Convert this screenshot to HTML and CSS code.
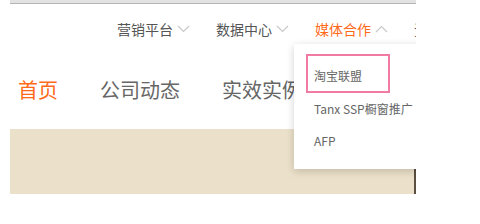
FILE: index.html
```html
<!DOCTYPE html>
<html lang="zh">
<head>
<meta charset="utf-8">
<link rel="stylesheet" href="styles.css">
</head>
<body>
<div class="frame">
  <div class="topbar"></div>
  <nav class="subnav">
    <span class="sub-item">营销平台<svg class="chev" viewBox="0 0 13 8"><path d="M1 1 L6.5 6.5 L12 1" /></svg></span>
    <span class="sub-item">数据中心<svg class="chev" viewBox="0 0 13 8"><path d="M1 1 L6.5 6.5 L12 1" /></svg></span>
    <span class="sub-item active">媒体合作<svg class="chev" viewBox="0 0 13 8"><path d="M1 7 L6.5 1.5 L12 7" /></svg></span>
    <span class="sub-item">资讯中心</span>
  </nav>
  <nav class="mainnav">
    <span class="main-item active">首页</span>
    <span class="main-item">公司动态</span>
    <span class="main-item">实效实例</span>
  </nav>
  <div class="banner"></div>
  <ul class="dropdown">
    <li class="first">淘宝联盟</li>
    <li>Tanx SSP橱窗推广</li>
    <li>AFP</li>
  </ul>
  <div class="highlight"></div>
</div>
</body>
</html>
```
FILE: styles.css
```css
* { box-sizing: border-box; }
html, body { margin: 0; padding: 0; background: #fff; }
body {
  font-family: "Noto Sans CJK SC", "Noto Sans", sans-serif;
}
.frame {
  position: relative;
  width: 406px;
  height: 194px;
  margin-left: 10px;
  overflow: hidden;
  background: #fff;
}
.topbar {
  height: 4px;
  background: #e2e2e2;
  border-bottom: 1px solid #b4b4b4;
}
.subnav {
  display: flex;
  align-items: center;
  gap: 26px;
  height: 50px;
  padding-left: 107px;
  white-space: nowrap;
}
.sub-item {
  display: flex;
  align-items: center;
  font-size: 14px;
  line-height: 18px;
  color: #555;
}
.sub-item.active { color: #ff6a1a; }
.chev {
  width: 13px;
  height: 8px;
  margin-left: 4px;
  fill: none;
  stroke: #c9c9c9;
  stroke-width: 1.2;
}
.mainnav {
  display: flex;
  align-items: center;
  gap: 42px;
  height: 75px;
  padding: 0 0 4px 8px;
  white-space: nowrap;
}
.main-item {
  font-size: 20px;
  line-height: 26px;
  color: #666;
}
.main-item.active { color: #ff6a1a; }
.banner {
  height: 65px;
  background: #ebe0c9;
  border-right: 2px solid #5a4f40;
}
.dropdown {
  position: absolute;
  left: 284px;
  top: 44px;
  width: 150px;
  margin: 0;
  padding: 14px 0 12px 0;
  list-style: none;
  background: #fff;
  box-shadow: 0 2px 8px rgba(0, 0, 0, 0.18);
}
.dropdown li {
  height: 32px;
  line-height: 32px;
  padding-left: 20px;
  font-size: 12px;
  color: #666;
  white-space: nowrap;
}
.dropdown li.first {
  height: 35px;
  line-height: 35px;
}
.highlight {
  position: absolute;
  left: 296px;
  top: 54px;
  width: 84px;
  height: 39px;
  border: 2px solid #f27ba3;
}
```
